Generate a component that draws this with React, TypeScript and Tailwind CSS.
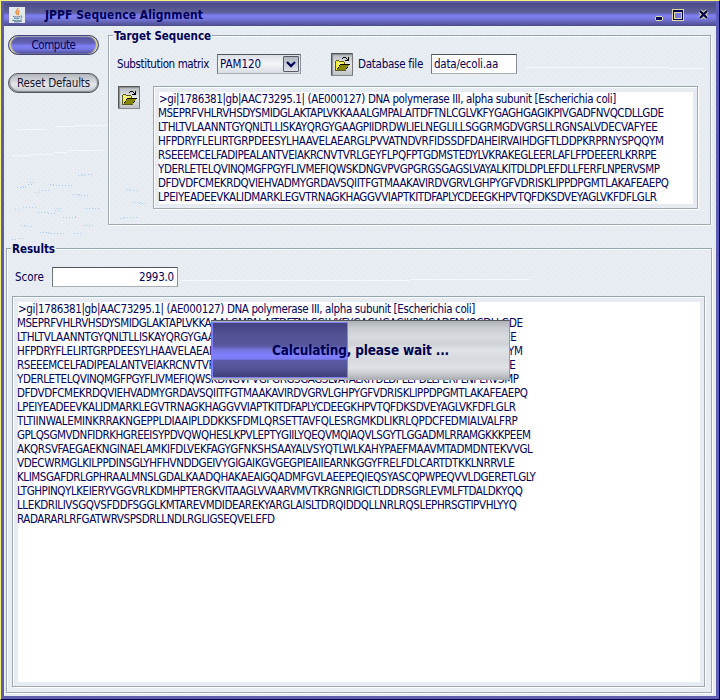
import { useLayoutEffect, useRef } from 'react';
import type { ReactNode } from 'react';

/* Single line of text tracked so that it fills exactly `w` pixels. */
function Fit({ w, children, className = '' }: { w: number; children: string; className?: string }) {
  const ref = useRef<HTMLSpanElement>(null);
  useLayoutEffect(() => {
    const el = ref.current;
    if (!el) return;
    el.style.letterSpacing = '0px';
    const natural = el.getBoundingClientRect().width;
    el.style.letterSpacing = `${(w - natural) / children.length}px`;
  }, [w, children]);
  return (
    <span className={`block shrink-0 whitespace-pre ${className}`} style={{ width: w }}>
      <span ref={ref} className="inline-block">{children}</span>
    </span>
  );
}

const SEQUENCE: [string, number][] = [
  ['>gi|1786381|gb|AAC73295.1| (AE000127) DNA polymerase III, alpha subunit [Escherichia coli]', 458],
  ['MSEPRFVHLRVHSDYSMIDGLAKTAPLVKKAAALGMPALAITDFTNLCGLVKFYGAGHGAGIKPIVGADFNVQCDLLGDE', 506],
  ['LTHLTVLAANNTGYQNLTLLISKAYQRGYGAAGPIIDRDWLIELNEGLILLSGGRMGDVGRSLLRGNSALVDECVAFYEE', 500],
  ['HFPDRYFLELIRTGRPDEESYLHAAVELAEARGLPVVATNDVRFIDSSDFDAHEIRVAIHDGFTLDDPKRPRNYSPQQYM', 506],
  ['RSEEEMCELFADIPEALANTVEIAKRCNVTVRLGEYFLPQFPTGDMSTEDYLVKRAKEGLEERLAFLFPDEEERLKRRPE', 499],
  ['YDERLETELQVINQMGFPGYFLIVMEFIQWSKDNGVPVGPGRGSGAGSLVAYALKITDLDPLEFDLLFERFLNPERVSMP', 502],
  ['DFDVDFCMEKRDQVIEHVADMYGRDAVSQIITFGTMAAKAVIRDVGRVLGHPYGFVDRISKLIPPDPGMTLAKAFEAEPQ', 511],
  ['LPEIYEADEEVKALIDMARKLEGVTRNAGKHAGGVVIAPTKITDFAPLYCDEEGKHPVTQFDKSDVEYAGLVKFDFLGLR', 499],
  ['TLTIINWALEMINKRRAKNGEPPLDIAAIPLDDKKSFDMLQRSETTAVFQLESRGMKDLIKRLQPDCFEDMIALVALFRP', 501],
  ['GPLQSGMVDNFIDRKHGREEISYPDVQWQHESLKPVLEPTYGIILYQEQVMQIAQVLSGYTLGGADMLRRAMGKKKPEEM', 514],
  ['AKQRSVFAEGAEKNGINAELAMKIFDLVEKFAGYGFNKSHSAAYALVSYQTLWLKAHYPAEFMAAVMTADMDNTEKVVGL', 516],
  ['VDECWRMGLKILPPDINSGLYHFHVNDDGEIVYGIGAIKGVGEGPIEAIIEARNKGGYFRELFDLCARTDTKKLNRRVLE', 498],
  ['KLIMSGAFDRLGPHRAALMNSLGDALKAADQHAKAEAIGQADMFGVLAEEPEQIEQSYASCQPWPEQVVLDGERETLGLY', 519],
  ['LTGHPINQYLKEIERYVGGVRLKDMHPTERGKVITAAGLVVAARVMVTKRGNRIGICTLDDRSGRLEVMLFTDALDKYQQ', 506],
  ['LLEKDRILIVSGQVSFDDFSGGLKMTAREVMDIDEAREKYARGLAISLTDRQIDDQLLNRLRQSLEPHRSGTIPVHLYYQ', 500],
  ['RADARARLRFGATWRVSPSDRLLNDLRGLIGSEQVELEFD', 258],
];

function Lines({ count }: { count: number }) {
  return (
    <div className="bg-white leading-[15px] h-full">
      {SEQUENCE.slice(0, count).map(([text, w], i) => (
        <Fit key={text} w={w - 1} className={i === 0 ? 'h-[14px]' : 'h-[14px] -indent-[0.5px]'}>{text}</Fit>
      ))}
    </div>
  );
}

function Group({ title, titleWidth, className, children }: { title: string; titleWidth: number; className: string; children: ReactNode }) {
  return (
    <section className={`relative border border-[#a0a8b0] border-t-[#92a6b6] shadow-[1px_1px_0_#fff,inset_1px_1px_0_#fff] ${className}`}>
      <h2 className="absolute -top-[8px] left-[4px] bg-[#e7ecf2] px-[1px] text-[11.500px] leading-[16px] font-bold">
        <Fit w={titleWidth}>{title}</Fit>
      </h2>
      {children}
    </section>
  );
}

const etched = 'border border-[#a0a8b0] border-t-[#92a6b6] shadow-[1px_1px_0_#fff,inset_1px_1px_0_#fff]';
const field = 'border border-t-[#50555e] border-l-[#70757e] border-r-[#8a8f98] border-b-[#a9aeb5]';

function FolderButton() {
  return (
    <button className="h-[23px] w-[22px] shrink-0 border border-t-[#555] border-l-[#555] border-r-[#777] border-b-[#888] rounded-[1px] bg-linear-to-b from-[#b2b6ba] via-[#e6e9ec] to-[#bfc3c7] shadow-[inset_1px_1px_1px_#888b90] flex items-center justify-center">
      <svg width="16" height="16" viewBox="0 0 16 16" shapeRendering="crispEdges" className="shrink-0">
        <path d="M1 5h1v9H1zM2 4h3v1H2zM5 5h5v1H5zM10 6h1v2h-1zM1 14h11v1H1z" fill="#5a5a20" />
        <path d="M2 5h3v1h5v3H6v1H5v1H4v1H3v2H2z" fill="#f6ee34" />
        <path d="M3 6h1v1H3zM5 6h1v1H5zM7 6h1v1H7zM4 7h1v1H4zM6 7h1v1H6zM3 8h1v1H3zM5 8h1v1H5z" fill="#fffcc0" />
        <path d="M6 8h10v1h-1v1h-1v2h-1v1h-1v1H3v-2h1v-1h1V9h1z" fill="#000" />
        <path d="M6 9h9v1h-1v1h-1v1h-1v2H3v-1h1v-1h1v-2h1z" fill="#858500" />
        <path d="M9 1h3v1H9zM8 2h1v1H8zM12 2h1v1h-1zM14 1h1v4h-4V4h2V3h1z" fill="#000" />
      </svg>
    </button>
  );
}

function Texture() {
  return (
    <svg className="absolute inset-0 h-full w-full pointer-events-none" shapeRendering="crispEdges">
      <defs>
        <pattern id="grain" width="6" height="6" patternUnits="userSpaceOnUse">
          <path d="M0 0h1v1H0zM3 3h1v1H3z" fill="#f1f4f8" />
          <path d="M2 5h1v1H2z" fill="#e2e9f0" />
        </pattern>
      </defs>
      <rect width="720" height="700" fill="url(#grain)" />
      <g transform="translate(-4 -3)" fill="none">
        <path stroke="#a6ccf3" strokeDasharray="1 2" d="M78 175.500h7M82 174.500h10M17 187.500h7M22 186.500h6M28 184.500h6M30 182.500h4M50 184.500h6M53 185.500h20M35 192.500h5M39 190.500h12M73 194.500h7M78 195.500h12M15 209.500h6M23 207.500h14M38 212.500h12M48 213.500h8M55 210.500h5M57 208.500h6M63 217.500h13M75 216.500h3M86 208.500h14M21 225.500h5M25 226.500h9M40 232.500h12M48 233.500h18M74 233.500h7M83 225.500h10M12 239.500h6M19 238.500h5" />
        <path stroke="#a6ccf3" strokeDasharray="1 2" d="M126 189.500h5M130 190.500h8M131 202.500h10M139 203.500h9M120 218.500h5M124 217.500h14" />
        <path stroke="#f5f7fa" d="M15 129.500h30M55 126.500h20M75 125.500h35M12 155.500h18M30 154.500h24M54 152.500h14M68 150.500h34M525 67.500h144M669 68.500h34M180 280.500h230M410 279.500h120" />
      </g>
    </svg>
  );
}

function TitleBar() {
  return (
    <header className="relative flex h-[23px] items-center bg-[linear-gradient(180deg,#494983_0%,#60609f_42%,#6363a5_44%,#7474dc_49%,#8080f4_57%,#7373d6_72%,#5c5ca8_88%,#4d4d8c_100%)]">
      <svg width="16" height="16" viewBox="0 0 16 16" className="ml-[5px] shrink-0">
        <rect width="16" height="16" fill="#e3e8ec" />
        <path d="M8.600 1c1.500 2-3 2.800-1.500 5 .5.800 1 1.300.8 2 M10.500 3.600c-2 1.200-1.600 1.800-1 2.700.4.700.2 1.200-.4 1.800" fill="none" stroke="#ec8a35" strokeWidth="1.400" />
        <path d="M4 9.400c1.500.8 5.500.7 7 0M5 11.200c1.300.7 4 .6 5.300 0M11.500 9c2.200-.3 2 1.700 0 2.200M3 13c2.200 1.200 7.500 1 9.500-.2M5 14.700c2.500.6 6 .3 8-.7" fill="none" stroke="#527ea0" strokeWidth="1" />
      </svg>
      <h1 className="ml-[20px] text-[12px] leading-[16px] font-bold"><Fit w={158}>JPPF Sequence Alignment</Fit></h1>
      <svg className="mr-[7px] ml-auto shrink-0" width="58" height="16" viewBox="0 0 58 16" shapeRendering="crispEdges">
        <path d="M5 9h6v1H5zM5 13h6v1H5zM4 10h1v3H4zM11 10h1v3h-1z" fill="#dedaa0" />
        <rect x="5" y="10" width="6" height="3" fill="#000050" />
        <rect x="21.500" y="2.500" width="11" height="11" fill="none" stroke="#dedaa0" />
        <path d="M22 3h10v10H22zM24 6v5h6V6z" fill="#000050" fillRule="evenodd" />
        <rect x="23.500" y="5.500" width="7" height="6" fill="#7878de" stroke="#dedaa0" />
        <path d="M49 4l7 7M56 4l-7 7" stroke="#dedaa0" strokeWidth="4.500" shapeRendering="auto" />
        <path d="M49 4l7 7M56 4l-7 7" stroke="#000050" strokeWidth="2.400" shapeRendering="auto" />
      </svg>
    </header>
  );
}

export default function App() {
  return (
    <div className="relative h-[700px] w-[720px] overflow-hidden border border-t-[#f6f27a] border-l-[#f6f27a] border-r-[#00004c] border-b-[#00004c] font-['DejaVu_Sans_Condensed','DejaVu_Sans',sans-serif] text-[11.500px] leading-[15px] text-[#000058]">
      <div className="relative flex h-full w-full flex-col border-t-2 border-r-[3px] border-b-[3px] border-l-[3px] border-[#5d5dab] border-r-[#5d5dbb] bg-[#e7ecf2]">
        <Texture />
        <TitleBar />
        <main className="relative flex-1">
          <div className="flex pt-[9px]">
            <nav className="flex w-[91px] shrink-0 flex-col gap-[18px] ml-[4px]">
              <button className="flex h-[20px] items-center justify-center rounded-full border border-[#45457c] bg-[linear-gradient(180deg,#54549b_0%,#6262b4_38%,#8080fa_55%,#7575df_75%,#4d4d93_100%)] shadow-[inset_2px_0_1px_#d8d690,inset_-2px_0_1px_#d8d690,inset_0_1px_1px_#9c9cc9]">
                <Fit w={44}>Compute</Fit>
              </button>
              <button className="flex h-[20px] items-center justify-center rounded-full border border-[#53565c] bg-[linear-gradient(180deg,#b5b9bf_0%,#d6dade_45%,#e5e8eb_60%,#c0c4c9_100%)] shadow-[inset_1px_-1px_1px_#858890,inset_-1px_0_1px_#858890] text-[#15152c]">
                <Fit w={73}>Reset Defaults</Fit>
              </button>
            </nav>
            <Group title="Target Sequence" titleWidth={97} className="ml-[9px] h-[190px] w-[603px]">
              <div className="flex h-[24px] items-center mt-[16px] ml-[8px]">
                <Fit w={92}>Substitution matrix</Fit>
                <div className={`ml-[8px] flex h-[20px] w-[84px] items-center bg-linear-to-b from-[#dce0e5] via-[#f3f5f7] to-[#d9dde1] pl-[2px] ${field}`}>
                  <Fit w={41}>PAM120</Fit>
                  <span className="mr-[1px] ml-auto flex h-[16px] w-[16px] items-center justify-center rounded-[1px] border border-[#555a66] bg-linear-to-b from-[#b3b7c0] to-[#dfe3e8]">
                    <svg width="10" height="8" viewBox="0 0 10 8"><path d="M1 2l4 4 4-4" fill="none" stroke="#000058" strokeWidth="2.300" /></svg>
                  </span>
                </div>
                <div className="ml-[30px]"><FolderButton /></div>
                <Fit w={65} className="ml-[5px]">Database file</Fit>
                <div className={`ml-[8px] flex h-[20px] w-[86px] items-center bg-white pl-[2px] ${field}`}>
                  <Fit w={64}>data/ecoli.aa</Fit>
                </div>
              </div>
              <div className="flex mt-[10px] ml-[9px]">
                <FolderButton />
                <div className={`ml-[13px] h-[123px] w-[545px] bg-[#e7ecf2] pt-[5px] pr-[4px] pb-[4px] pl-[5px] ${etched}`}>
                  <Lines count={8} />
                </div>
              </div>
            </Group>
          </div>
          <Group title="Results" titleWidth={43} className="mt-[23px] ml-[2px] h-[445px] w-[706px]">
            <div className="flex items-center mt-[18px] ml-[8px]">
              <Fit w={29}>Score</Fit>
              <div className={`ml-[8px] flex h-[20px] w-[126px] items-center justify-end bg-white pr-[3px] ${field}`}>
                <Fit w={35}>2993.0</Fit>
              </div>
            </div>
            <div className={`mt-[9px] ml-[5px] h-[391px] w-[693px] bg-[#e7ecf2] pt-[5px] pr-[4px] pb-[4px] pl-[5px] ${etched}`}>
              <Lines count={16} />
            </div>
          </Group>
        </main>
      </div>
      <div role="progressbar" className="absolute top-[319px] left-[210px] h-[60px] w-[299px] border border-t-[#555960] border-l-[#7c8088] border-r-[#969aa0] border-b-2 border-b-[#adb1b5] bg-[linear-gradient(180deg,#aeb2b7_0%,#c8ccd0_12%,#d8dbdf_28%,#ced2d6_40%,#dfe2e5_50%,#d6dade_68%,#e0e3e5_82%,#c7cbcf_93%,#b1b5ba_100%)]">
        <div className="mt-px h-[56px] w-[136px] border border-[#8080ff] bg-[linear-gradient(180deg,#424280_0%,#525294_22%,#57579d_42%,#7373dc_49%,#8080ff_59%,#7b7bf3_67%,#5a5aa7_69%,#55559b_82%,#404078_100%)]" />
        <div className="absolute top-[20px] left-[60px] text-[13.500px] leading-[18px] font-bold text-[#000050]">
          <Fit w={177}>Calculating, please wait ...</Fit>
        </div>
      </div>
    </div>
  );
}
